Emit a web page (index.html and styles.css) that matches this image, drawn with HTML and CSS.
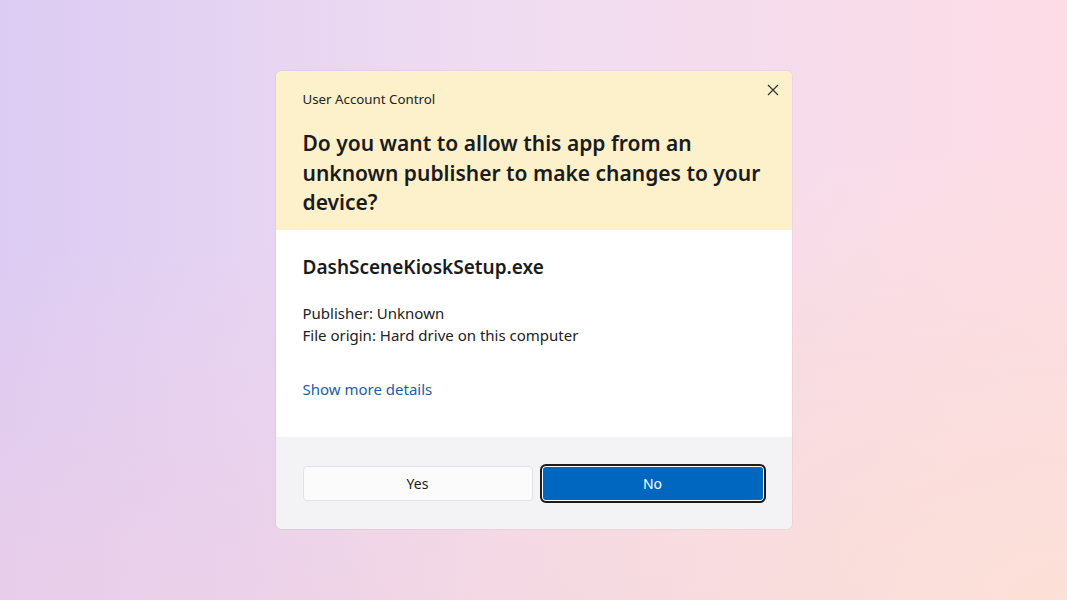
FILE: index.html
```html
<!DOCTYPE html>
<html lang="en">
<head>
    <meta charset="UTF-8">
    <meta name="viewport" content="width=device-width, initial-scale=1.0">
    <title>User Account Control</title>
    <link rel="stylesheet" href="styles.css">
</head>
<body>

    <div class="dialog">
        <div class="header">
            <button class="close" aria-label="Close">
                <svg width="12" height="12" viewBox="0 0 12 12">
                    <path d="M1 1 L11 11 M11 1 L1 11" stroke="#333" stroke-width="1.2" fill="none"/>
                </svg>
            </button>
            <div class="caption">User Account Control</div>
            <h1>Do you want to allow this app from an unknown publisher to make changes to your device?</h1>
        </div>

        <div class="content">
            <h2>DashSceneKioskSetup.exe</h2>
            <p>Publisher: Unknown<br>File origin: Hard drive on this computer</p>
            <a class="details" href="#">Show more details</a>
        </div>

        <div class="footer">
            <button class="button yes">Yes</button>
            <button class="button no">No</button>
        </div>
    </div>

</body>
</html>
```

FILE: styles.css
```css
body {
    font-family: 'Noto Sans', 'Open Sans', sans-serif;
    margin: 0;
    height: 100vh;
    display: flex;
    align-items: center;
    justify-content: center;
    background:
        linear-gradient(to bottom, rgba(240, 207, 227, 0) 40%, rgba(240, 207, 227, 0.6) 100%),
        linear-gradient(to right, #dccbf3 0%, #efdcf2 45%, #fddce6 100%);
    position: relative;
}
body::after {
    content: '';
    position: absolute;
    inset: 0;
    background: radial-gradient(ellipse at 100% 100%, rgba(253, 226, 214, 0.9) 0%, rgba(253, 226, 214, 0) 55%);
    pointer-events: none;
}
.dialog {
    width: 516px;
    background-color: #fff;
    border-radius: 6px;
    overflow: hidden;
    box-shadow: 0 0 0 1px rgba(0, 0, 0, 0.04);
    position: relative;
    z-index: 1;
}
.header {
    background-color: #fdf1cc;
    padding: 19px 20px 12px 27px;
    position: relative;
    height: 128px;
}
.close {
    position: absolute;
    top: 12px;
    right: 12px;
    width: 14px;
    height: 14px;
    padding: 0;
    border: none;
    background: none;
    display: flex;
    align-items: center;
    justify-content: center;
}
.caption {
    font-size: 13.3px;
    color: #222;
    line-height: 18px;
}
h1 {
    margin: 21px 0 0;
    font-size: 21px;
    font-weight: 600;
    line-height: 29.5px;
    color: #1b1b1b;
}
.content {
    padding: 24px 28px 0 27px;
    height: 183px;
}
h2 {
    margin: 0;
    font-size: 19px;
    font-weight: 600;
    line-height: 26px;
    color: #1b1b1b;
}
.content p {
    margin: 22px 0 0;
    font-size: 15px;
    line-height: 22px;
    color: #222;
}
.details {
    display: inline-block;
    margin-top: 33px;
    font-size: 15px;
    color: #1a5ea8;
    text-decoration: none;
}
.footer {
    background-color: #f3f2f5;
    height: 92px;
    display: flex;
    align-items: center;
    gap: 7px;
    padding: 0 0 0 27px;
}
.button {
    font-family: inherit;
    font-size: 14px;
    border-radius: 4px;
}
.yes {
    width: 230px;
    height: 35px;
    background-color: #fbfbfb;
    border: 1px solid #e3e3e6;
    color: #1b1b1b;
}
.no {
    width: 226px;
    height: 39px;
    background-color: #0067c0;
    color: #fff;
    border: 2px solid #1b1b1b;
    box-shadow: inset 0 0 0 1px #fff;
    border-radius: 6px;
}
```
